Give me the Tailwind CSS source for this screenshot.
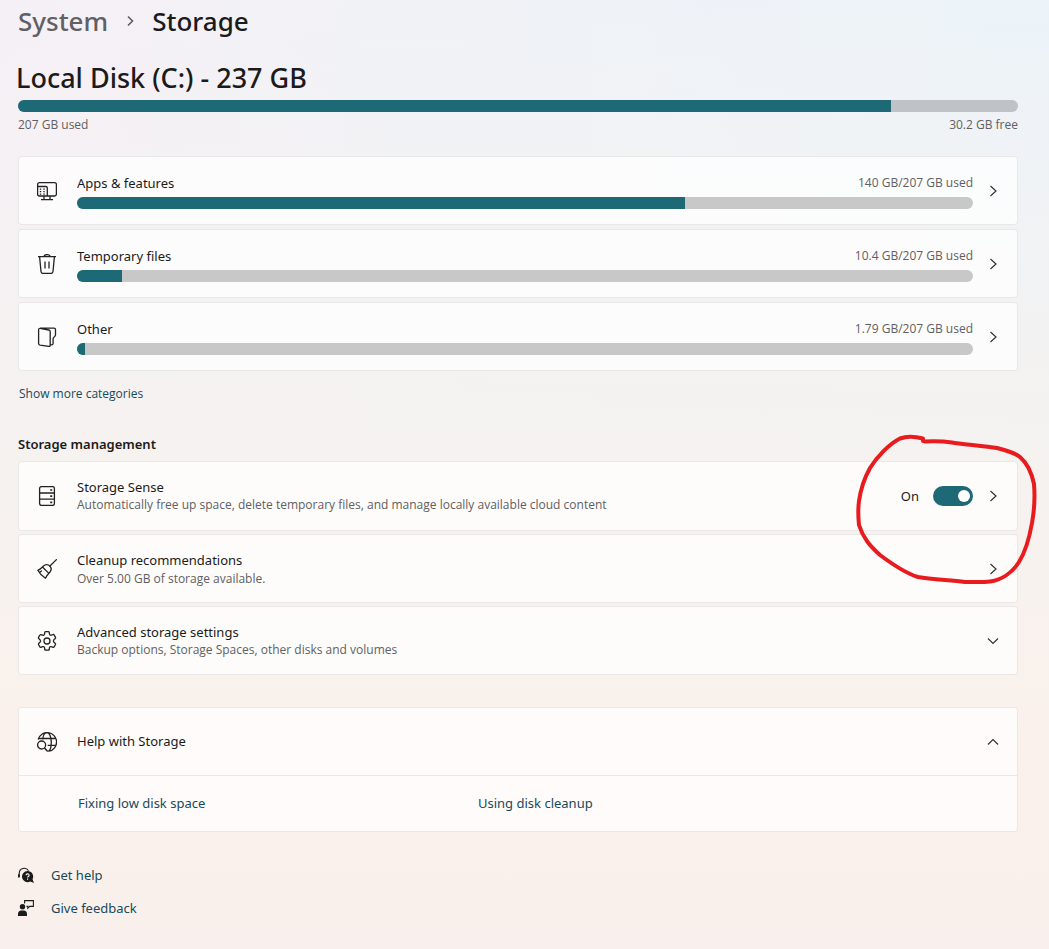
<!DOCTYPE html>
<html lang="en">
<head>
<meta charset="utf-8">
<meta name="viewport" content="width=device-width, initial-scale=1">
<title>Storage</title>
<script src="https://cdn.jsdelivr.net/npm/@tailwindcss/browser@4"></script>
</head>
<body class="min-h-screen bg-[linear-gradient(to_bottom,transparent,#f5f2f0_48%,#faf1ec_75%,#f9f0ed),linear-gradient(to_right,#f6f0f6,#f1f2f7_35%,#ecf3f9)] font-['Noto_Sans',sans-serif] text-sm text-[#1b1b1b]">
<main class="relative flex flex-col pr-[31px] pl-[18px] pt-[3px] pb-8">
  <nav aria-label="Breadcrumb" class="flex h-9 items-center text-[26px] leading-9 font-medium">
    <a href="#system" class="text-[#616062]">System</a>
    <svg class="mx-4 size-3" viewBox="0 0 12 12" fill="none" stroke="#5c5c5e" stroke-width="1.6"><path d="M4 1.5 8.500 6 4 10.500"/></svg>
    <h1>Storage</h1>
  </nav>

  <section class="mt-[21px]" aria-label="Local disk usage">
    <h2 class="-ml-0.5 h-10 text-[27px] leading-9 font-medium">Local Disk (C:) - 237 GB</h2>
    <div role="progressbar" aria-label="Disk used" aria-valuenow="207" aria-valuemax="237" class="h-3 overflow-hidden rounded-full bg-[#bfc2c7]"><div class="h-full bg-[#1e6976]" style="width:87.3%"></div></div>
    <div class="mt-1 flex justify-between font-['Open_Sans',sans-serif] text-xs leading-[18px] text-[#606062]"><span>207 GB used</span><span>30.2 GB free</span></div>
  </section>

  <section class="mt-[22px] flex flex-col gap-1" aria-label="Categories">
    <a href="#apps" class="flex h-[69px] items-center rounded border border-black/8 bg-white/75 px-[18px]">
      <svg class="size-5 shrink-0" viewBox="0 0 20 20" fill="none" stroke="#222" stroke-width="1.300"><rect x=".6" y="1.600" width="18.800" height="13.400" rx="1.800"/><path d="M.6 5.500h8.200a1.500 1.500 0 0 1 1.500 1.500v8M7 15v3.500M13 15v3.500M4 18.600h12"/><path d="M2.800 8.200h1.400M6.300 8.200h1.400M2.800 10.700h1.400M6.300 10.700h1.400M2.800 13.100h1.400M6.300 13.100h1.400"/></svg>
      <div class="ml-5 min-w-0 flex-1">
        <div class="flex items-center justify-between leading-5"><span class="text-[13px]">Apps &amp; features</span><span class="font-['Open_Sans',sans-serif] text-xs leading-[18px] text-[#606062]">140 GB/207 GB used</span></div>
        <div role="progressbar" aria-label="Apps and features" aria-valuenow="68" class="mt-1 h-3 overflow-hidden rounded-full bg-[#c8c8c8]"><div class="h-full bg-[#1e6976]" style="width:67.9%"></div></div>
      </div>
      <svg class="ml-3.5 size-3 shrink-0" viewBox="0 0 12 12" fill="none" stroke="#333" stroke-width="1.200"><path d="M3.500 1 9 6l-5.500 5"/></svg>
    </a>
    <a href="#temporary" class="flex h-[69px] items-center rounded border border-black/8 bg-white/75 px-[18px]">
      <svg class="size-5 shrink-0" viewBox="0 0 20 20" fill="none" stroke="#222" stroke-width="1.300"><path d="M1 2.700h18M7 2.700c0-2.800 6-2.800 6 0M2.600 2.700 4 17.500c.2 1.300.8 1.900 2 1.900h8c1.200 0 1.800-.6 2-1.900l1.400-14.800M8 7.500v7M12 7.500v7"/></svg>
      <div class="ml-5 min-w-0 flex-1">
        <div class="flex items-center justify-between leading-5"><span class="text-[13px]">Temporary files</span><span class="font-['Open_Sans',sans-serif] text-xs leading-[18px] text-[#606062]">10.4 GB/207 GB used</span></div>
        <div role="progressbar" aria-label="Temporary files" aria-valuenow="5" class="mt-1 h-3 overflow-hidden rounded-full bg-[#c8c8c8]"><div class="h-full bg-[#1e6976]" style="width:5%"></div></div>
      </div>
      <svg class="ml-3.5 size-3 shrink-0" viewBox="0 0 12 12" fill="none" stroke="#333" stroke-width="1.200"><path d="M3.500 1 9 6l-5.500 5"/></svg>
    </a>
    <a href="#other" class="flex h-[69px] items-center rounded border border-black/8 bg-white/75 px-[18px]">
      <svg class="size-5 shrink-0" viewBox="0 0 20 20" fill="none" stroke="#222" stroke-width="1.300" stroke-linejoin="round"><path d="M1.600 16.500V2.700c0-.9.700-1.500 1.600-1.400l8.600 1.700c.9.200 1.400.9 1.400 1.700v13.600c0 .8-.5 1.200-1.300 1.100l-8.800-1.200c-1-.2-1.500-.8-1.500-1.700ZM3 1.100h14c1 0 1.500.6 1.500 1.500v5.200c0 1-.4 1.500-1 2-.9.600-1.400 1-1.400 2v4.400c0 1-.6 1.700-1.500 1.700h-1.400"/></svg>
      <div class="ml-5 min-w-0 flex-1">
        <div class="flex items-center justify-between leading-5"><span class="text-[13px]">Other</span><span class="font-['Open_Sans',sans-serif] text-xs leading-[18px] text-[#606062]">1.79 GB/207 GB used</span></div>
        <div role="progressbar" aria-label="Other" aria-valuenow="1" class="mt-1 h-3 overflow-hidden rounded-full bg-[#c8c8c8]"><div class="h-full bg-[#1e6976]" style="width:0.9%"></div></div>
      </div>
      <svg class="ml-3.5 size-3 shrink-0" viewBox="0 0 12 12" fill="none" stroke="#333" stroke-width="1.200"><path d="M3.500 1 9 6l-5.500 5"/></svg>
    </a>
  </section>
  <button type="button" class="mt-[13px] ml-px self-start font-['Open_Sans',sans-serif] text-xs leading-5 font-medium text-[#174a58]">Show more categories</button>

  <section class="mt-[30px] flex flex-col gap-[3px]">
    <h2 class="mb-1 text-[13px] leading-5 font-semibold">Storage management</h2>
    <div class="flex h-[70px] items-center rounded border border-black/8 bg-white/75 px-[18px]">
      <svg class="size-5 shrink-0" viewBox="0 0 20 20" fill="none" stroke="#222" stroke-width="1.300"><rect x="2.600" y=".6" width="14.800" height="18.800" rx="1.800"/><path d="M2.600 7h14.800M2.600 13.200h14.800"/><path d="M13.200 4h2M13.200 10.200h2M13.200 16.300h2" stroke-width="1.700"/></svg>
      <a href="#sense" class="ml-5 block min-w-0 flex-1"><span class="block text-[13px] leading-[18px]">Storage Sense</span><span class="block font-['Open_Sans',sans-serif] text-xs leading-[18px] text-[#606062]">Automatically free up space, delete temporary files, and manage locally available cloud content</span></a>
      <label for="sense" class="mr-3.5 text-[13px]">On</label>
      <input id="sense" type="checkbox" role="switch" checked class="h-5 w-10 shrink-0 appearance-none rounded-full bg-[#1e6976] before:mt-1 before:ml-[25px] before:block before:size-3 before:rounded-full before:bg-white">
      <a href="#sense" aria-label="Open Storage Sense" class="ml-3.5"><svg class="size-3" viewBox="0 0 12 12" fill="none" stroke="#333" stroke-width="1.200"><path d="M3.500 1 9 6l-5.500 5"/></svg></a>
    </div>
    <a href="#cleanup" class="flex h-[69px] items-center rounded border border-black/8 bg-white/75 px-[18px]">
      <svg class="size-5 shrink-0" viewBox="0 0 20 20" fill="none" stroke="#222" stroke-width="1.300" stroke-linejoin="round" stroke-linecap="round"><path d="m19.400.6-6.700 6.700M.8 11.300C3.500 10.500 5 8.500 6.500 7c2-2 4.800-1.600 6.300 0s1.800 4.200 0 6.200c-1.400 1.600-3.200 3-4.300 6C5.500 17.300 2.500 14.500.8 11.300ZM5.500 8l6.400 6.400M2.500 13.500l2-1.600"/></svg>
      <span class="ml-5 block min-w-0 flex-1"><span class="block text-[13px] leading-5">Cleanup recommendations</span><span class="block font-['Open_Sans',sans-serif] text-xs leading-[18px] text-[#606062]">Over 5.00 GB of storage available.</span></span>
      <svg class="size-3" viewBox="0 0 12 12" fill="none" stroke="#333" stroke-width="1.200"><path d="M3.500 1 9 6l-5.500 5"/></svg>
    </a>
    <button type="button" aria-expanded="false" class="flex h-[69px] items-center rounded border border-black/8 bg-white/75 px-[18px] text-left">
      <svg class="size-5 shrink-0" viewBox="0 0 20 20" fill="none" stroke="#222" stroke-width="1.300" stroke-linejoin="round"><path d="M8.600.7h2.800c.4 0 .7.300.8.700l.3 1.700c.2.900 1 1.300 1.900 1l1.700-.6c.4-.1.800 0 1 .4l1.400 2.400c.2.400.1.800-.2 1.100l-1.300 1.200c-.7.700-.7 1.900 0 2.600l1.300 1.200c.3.300.4.700.2 1.100l-1.400 2.400c-.2.400-.6.500-1 .4l-1.700-.6c-.9-.3-1.700.1-1.900 1l-.3 1.800c-.1.400-.4.700-.8.700H8.600c-.4 0-.7-.3-.8-.7l-.3-1.800c-.2-.9-1-1.300-1.900-1l-1.700.6c-.4.100-.8 0-1-.4l-1.400-2.400c-.2-.4-.1-.8.200-1.100L3 11.200c.7-.7.700-1.700 0-2.400L1.700 7.500c-.3-.3-.4-.7-.2-1.100L2.900 4c.2-.4.600-.5 1-.4l1.700.6c.9.300 1.700-.1 1.900-1l.3-1.800c.1-.4.400-.7.800-.7Z"/><circle cx="10" cy="10" r="3"/></svg>
      <span class="ml-5 block min-w-0 flex-1"><span class="block text-[13px] leading-[18px]">Advanced storage settings</span><span class="block font-['Open_Sans',sans-serif] text-xs leading-[18px] text-[#606062]">Backup options, Storage Spaces, other disks and volumes</span></span>
      <svg class="size-3" viewBox="0 0 12 12" fill="none" stroke="#333" stroke-width="1.200"><path d="m1 3.500 5 5 5-5"/></svg>
    </button>
  </section>

  <section class="mt-8 rounded border border-black/8 bg-white/75 text-[13px]">
    <button type="button" aria-expanded="true" class="flex h-[67px] w-full items-center px-[18px] text-left">
      <svg class="size-5 shrink-0" viewBox="0 0 20 20" fill="none" stroke="#222" stroke-width="1.300"><path d="M1.100 7.500A9.400 9.400 0 1 1 12 19.200M1.600 6.500h16.900M10.700 13.300h8M5.700 7.500C6 3.300 8 .6 10 .6s4.300 3.600 4.300 9.400-1.700 8.800-3 9.400"/><circle cx="4.600" cy="13" r="4"/><path d="m7.500 16 3.200 3.500" stroke-width="1.500"/></svg>
      <span class="ml-5 flex-1">Help with Storage</span>
      <svg class="size-3" viewBox="0 0 12 12" fill="none" stroke="#333" stroke-width="1.200"><path d="m1 8.500 5-5 5 5"/></svg>
    </button>
    <div class="grid h-14 grid-cols-[400px_1fr] items-center border-t border-black/8 pl-[59px] text-[#174a58]">
      <a href="#low-space">Fixing low disk space</a>
      <a href="#disk-cleanup">Using disk cleanup</a>
    </div>
  </section>

  <footer class="mt-[33px] flex flex-col items-start gap-[13px] text-[13px] leading-5 text-[#174a58]">
    <a href="#help" class="flex items-center gap-[17px]"><svg class="size-4" viewBox="0 0 16 16"><path d="M1.200 10V6.200a5 5 0 0 1 9.300-2.500" fill="none" stroke="#1b1b1b" stroke-width="1.100"/><path d="M0 7.200h1.700v3.300H0zM9.600 4a5.600 5.600 0 1 0 2.700 10.500L16 16l-1.500-3.700A5.600 5.600 0 0 0 9.600 4Z" fill="#1b1b1b"/><path d="M8 8.300c.1-2 3.200-1.900 3.100-.1 0 1.300-1.500 1.200-1.500 2.400M9.600 11.500v1.200" fill="none" stroke="#fff" stroke-width="1.100"/></svg>Get help</a>
    <a href="#feedback" class="flex items-center gap-[17px]"><svg class="size-4" viewBox="0 0 16 16"><circle cx="4.500" cy="6.800" r="2.700" fill="#1b1b1b"/><path d="M0 16v-2.200c0-2 1.300-3.300 3.200-3.300h2.600c1.900 0 3.200 1.300 3.200 3.300V16Z" fill="#1b1b1b"/><path d="M6.600 3.500V.6h8.800v5.800h-3.600l-2 1.800V6.400H8.500" fill="none" stroke="#1b1b1b" stroke-width="1.100"/></svg>Give feedback</a>
  </footer>

  <!-- Hand-drawn marker around the Storage Sense switch -->
  <svg class="pointer-events-none absolute top-[430px] right-[9px] h-40 w-[190px]" viewBox="850 430 190 160" fill="none" stroke="#e81b1e" stroke-width="4" stroke-linecap="round" stroke-linejoin="round"><path d="M925 441.500C935 441 945 441.500 952 442.500C960 444 985 446 997 448C1005 450 1015 453 1020 457C1028 464 1032 474 1034 484C1035 496 1034 512 1032 523C1029 540 1024 554 1019 562C1012 573 1001 580 990 581.500C982 582.500 974 582 965 582C950 580 933 579.500 918 577C905 573 892 564 880 555C870 546 863 538 859 525C858 515 858 508 859 501C861 487 865 477 870 468C877 457 889 444 900 438.500C907 436 917 437 923 438.500V441"/></svg>
</main>
</body>
</html>
